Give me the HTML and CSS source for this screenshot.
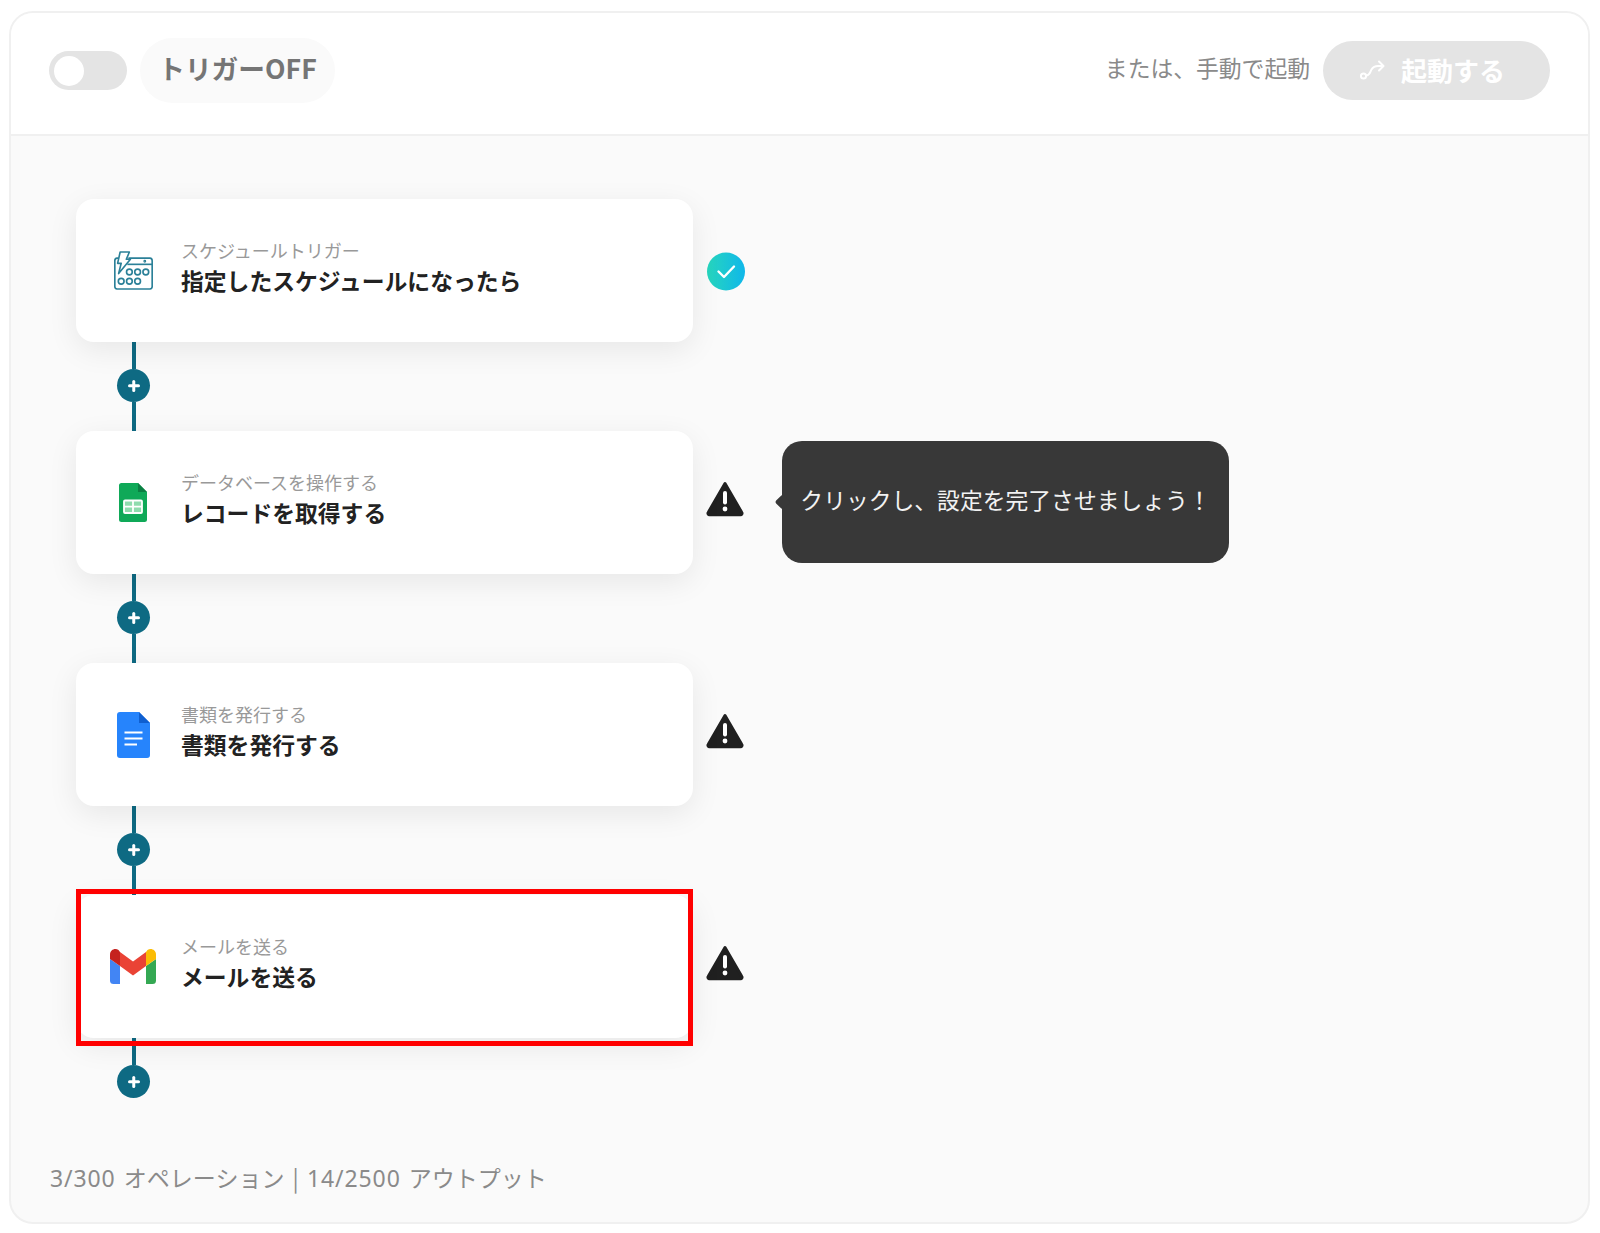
FILE: index.html
```html
<!DOCTYPE html>
<html lang="ja">
<head>
<meta charset="utf-8">
<title>フローボット</title>
<link rel="stylesheet" href="styles.css">
</head>
<body>
<main class="panel">
  <header class="topbar">
    <div class="trigger">
      <span class="toggle"><span class="knob"></span></span>
      <span class="trigger-label">トリガーOFF</span>
    </div>
    <div class="manual">
      <span class="manual-text">または、手動で起動</span>
      <button class="start" type="button">
        <svg class="start-icon" viewBox="0 0 26 22" fill="none" stroke="#fff" stroke-width="2" stroke-linecap="round" stroke-linejoin="round">
          <circle cx="3.500" cy="16" r="2.600"/>
          <path d="M6.200 15.500C10 15.500 10 12 11.500 9.500 13 7 15 6 18 6h5"/>
          <path d="M19 1.500L23.500 6 19 10.500"/>
        </svg>
        <span class="start-label">起動する</span>
      </button>
    </div>
  </header>

  <section class="flow">
    <div class="step">
      <div class="card">
        <div class="card-icon">
          <svg width="41" height="39" viewBox="0 0 38 38" fill="none" stroke="#2b8098" stroke-width="1.600" stroke-linejoin="round">
            <path d="M4 7H3a2.500 2.500 0 0 0-2.200 2.500v25A2.500 2.500 0 0 0 3 37h32a2.500 2.500 0 0 0 2.200-2.500v-25A2.500 2.500 0 0 0 35 7H14"/>
            <path d="M6 1h9l-3 7h4L4.500 22 7 12H3.500z"/>
            <path d="M13 13h24"/>
            <circle cx="30" cy="10" r=".6"/>
            <circle cx="15" cy="20.500" r="2.800"/><circle cx="23" cy="20.500" r="2.800"/><circle cx="31" cy="20.500" r="2.800"/>
            <circle cx="7" cy="29.500" r="2.800"/><circle cx="15" cy="29.500" r="2.800"/><circle cx="23" cy="29.500" r="2.800"/>
          </svg>
        </div>
        <div class="card-text">
          <span class="card-sub">スケジュールトリガー</span>
          <span class="card-title">指定したスケジュールになったら</span>
        </div>
      </div>
      <div class="status status-ok">
        <svg width="38" height="39" viewBox="0 0 38 39">
          <defs><linearGradient id="okg" x1="0" y1="0" x2="1" y2="0"><stop offset="0" stop-color="#27d6bd"/><stop offset="1" stop-color="#0fb7ea"/></linearGradient></defs>
          <circle cx="19" cy="19.500" r="19" fill="url(#okg)"/>
          <path d="M11.500 19.500l5.500 5.500 10-10.500" fill="none" stroke="#fff" stroke-width="2.400" stroke-linecap="round" stroke-linejoin="round"/>
        </svg>
      </div>
    </div>
    <div class="link"><span class="seg"></span><span class="plus"></span><span class="seg"></span></div>

    <div class="step">
      <div class="card">
        <div class="card-icon">
          <svg width="28" height="39" viewBox="0 0 28 39">
            <path d="M2.500 0H19l9 9v27.500a2.500 2.500 0 0 1-2.500 2.500h-23A2.500 2.500 0 0 1 0 36.500v-34A2.500 2.500 0 0 1 2.500 0z" fill="#0fa958"/>
            <path d="M19 0l9 9h-9z" fill="#0b7f43"/>
            <rect x="5" y="17.500" width="18" height="12.500" rx="1" fill="#8fdcae" stroke="#fff" stroke-width="1.800"/>
            <path d="M14 17.500v12.500M5 23.700h18" stroke="#fff" stroke-width="1.800"/>
          </svg>
        </div>
        <div class="card-text">
          <span class="card-sub">データベースを操作する</span>
          <span class="card-title">レコードを取得する</span>
        </div>
      </div>
      <div class="status">
        <svg class="warn" width="38" height="36" viewBox="0 0 38 36"><path d="M19 2.500L35.800 31.500a1.500 1.500 0 0 1-1.300 2.300h-31a1.500 1.500 0 0 1-1.300-2.300z" fill="#202020" stroke="#202020" stroke-width="3" stroke-linejoin="round"/><rect x="17" y="10" width="4" height="13.500" rx="2" fill="#fff"/><circle cx="19" cy="28" r="2.400" fill="#fff"/></svg>
      </div>
      <div class="tip"><span class="tip-text">クリックし、設定を完了させましょう！</span></div>
    </div>
    <div class="link"><span class="seg"></span><span class="plus"></span><span class="seg"></span></div>

    <div class="step">
      <div class="card">
        <div class="card-icon">
          <svg width="33" height="46" viewBox="0 0 33 46">
            <path d="M3 0H22l11 11v32a3 3 0 0 1-3 3H3a3 3 0 0 1-3-3V3a3 3 0 0 1 3-3z" fill="#2684fc"/>
            <path d="M22 0l11 11H22z" fill="#0f5fd0"/>
            <path d="M7.500 20.500h18M7.500 26.500h18M7.500 32.500h12.500" stroke="#fff" stroke-width="2.200"/>
          </svg>
        </div>
        <div class="card-text">
          <span class="card-sub">書類を発行する</span>
          <span class="card-title">書類を発行する</span>
        </div>
      </div>
      <div class="status">
        <svg class="warn" width="38" height="36" viewBox="0 0 38 36"><path d="M19 2.500L35.800 31.500a1.500 1.500 0 0 1-1.300 2.300h-31a1.500 1.500 0 0 1-1.300-2.300z" fill="#202020" stroke="#202020" stroke-width="3" stroke-linejoin="round"/><rect x="17" y="10" width="4" height="13.500" rx="2" fill="#fff"/><circle cx="19" cy="28" r="2.400" fill="#fff"/></svg>
      </div>
    </div>
    <div class="link"><span class="seg"></span><span class="plus"></span><span class="seg"></span></div>

    <div class="step">
      <div class="card">
        <span class="highlight"></span>
        <div class="card-icon">
          <svg width="46" height="35" viewBox="0 0 46 35">
            <path d="M0 10v21.500A3.500 3.500 0 0 0 3.500 35H10V17z" fill="#4285f4"/>
            <path d="M36 17v18h6.500a3.500 3.500 0 0 0 3.500-3.500V10z" fill="#34a853"/>
            <path d="M36 3v14l10-7V5.500C46 1 41 -1.500 37.500 1z" fill="#fbbc04"/>
            <path d="M10 17V3l13 9.500L36 3v14L23 26.500z" fill="#ea4335"/>
            <path d="M0 5.500V10l10 7V3L8.500 1C5-1.500 0 1 0 5.500z" fill="#c5221f"/>
          </svg>
        </div>
        <div class="card-text">
          <span class="card-sub">メールを送る</span>
          <span class="card-title">メールを送る</span>
        </div>
      </div>
      <div class="status">
        <svg class="warn" width="38" height="36" viewBox="0 0 38 36"><path d="M19 2.500L35.800 31.500a1.500 1.500 0 0 1-1.300 2.300h-31a1.500 1.500 0 0 1-1.300-2.300z" fill="#202020" stroke="#202020" stroke-width="3" stroke-linejoin="round"/><rect x="17" y="10" width="4" height="13.500" rx="2" fill="#fff"/><circle cx="19" cy="28" r="2.400" fill="#fff"/></svg>
      </div>
    </div>
    <div class="link"><span class="seg"></span><span class="plus"></span></div>
  </section>

  <footer class="usage"><span class="num">3/300</span> オペレーション | <span class="num">14/2500</span> アウトプット</footer>
</main>
</body>
</html>
```
FILE: styles.css
```css
* { box-sizing: border-box; }
html, body { margin: 0; height: 100%; background: #fff; }
body {
  padding: 11px 10px 0 9px;
  font-family: "Noto Sans CJK JP", "Noto Sans", sans-serif;
}
.panel {
  height: 1213px;
  display: flex;
  flex-direction: column;
  background: #fafafa;
  border: 2px solid #f0f0f0;
  border-radius: 24px;
  overflow: hidden;
}
.topbar {
  height: 123px;
  flex: none;
  display: flex;
  align-items: center;
  justify-content: space-between;
  padding: 0 38px 6px 38px;
  background: #fff;
  border-bottom: 2px solid #f0f0f0;
}
.trigger, .manual { display: flex; align-items: center; }
.trigger { gap: 13px; }
.toggle {
  width: 78px;
  height: 39px;
  display: flex;
  align-items: center;
  padding-left: 5px;
  background: #e4e4e4;
  border-radius: 20px;
}
.knob { width: 30px; height: 30px; background: #fff; border-radius: 50%; }
.trigger-label {
  width: 195px;
  height: 65px;
  display: flex;
  align-items: center;
  justify-content: center;
  padding-bottom: 6px;
  background: #fafafa;
  border-radius: 33px;
  color: #757575;
  font-size: 26.700px;
  font-weight: 700;
}
.manual { gap: 13px; }
.manual-text { padding-bottom: 6px; color: #8a8a8a; font-size: 22.800px; }
.start {
  width: 227px;
  height: 59px;
  display: flex;
  align-items: center;
  justify-content: center;
  gap: 15px;
  padding: 0 8px 0 0;
  border: 0;
  border-radius: 30px;
  background: #e4e4e4;
  color: #fff;
  font: 700 26px "Noto Sans CJK JP", sans-serif;
}
.start-icon { width: 26px; height: 22px; }
.start-label { padding-bottom: 3px; }

.flow { padding: 63px 0 0 65px; flex: none; }
.step { display: flex; align-items: center; }
.card {
  position: relative;
  width: 617px;
  height: 143px;
  flex: none;
  display: flex;
  align-items: center;
  gap: 22px;
  padding-left: 31px;
  background: #fff;
  border-radius: 18px;
  box-shadow: 0 8px 30px rgba(0, 0, 0, 0.08);
}
.card-icon {
  width: 52px;
  flex: none;
  display: flex;
  justify-content: center;
}
.card-icon svg { display: block; }
.card-text { display: flex; flex-direction: column; padding-bottom: 6px; }
.card-sub { color: #999; font-size: 18px; line-height: 26px; }
.card-title { color: #222; font-size: 22.800px; font-weight: 700; line-height: 35px; }
.highlight {
  position: absolute;
  inset: -6px 0 -8px 0;
  border: 5px solid #f00;
  pointer-events: none;
}
.status {
  width: 38px;
  margin-left: 13px;
  flex: none;
  display: flex;
  justify-content: center;
}
.status svg { display: block; }
.status-ok { margin-left: 14px; margin-top: 1px; }
.warn { margin-top: -8px; }
.tip {
  position: relative;
  width: 447px;
  height: 122px;
  margin: 0 0 1px 38px;
  display: flex;
  align-items: center;
  justify-content: center;
  color: #f2f2f2;
  font-size: 22.800px;
  background: #383838;
  border-radius: 20px;
}
.tip-text { padding-bottom: 5px; }
.tip::before {
  content: "";
  position: absolute;
  left: -5px;
  top: 50%;
  width: 11px;
  height: 11px;
  background: #383838;
  transform: translateY(-50%) rotate(45deg);
  border-radius: 2px;
}
.link {
  width: 33px;
  margin-left: 41px;
  display: flex;
  flex-direction: column;
  align-items: center;
}
.seg { width: 4px; height: 27px; background: #0e6a83; }
.seg:last-child { height: 29px; }
.plus {
  position: relative;
  width: 33px;
  height: 33px;
  flex: none;
  background: #0e6a83;
  border-radius: 50%;
}
.plus::before, .plus::after {
  content: "";
  position: absolute;
  left: 50%;
  top: 50%;
  background: #fff;
  border-radius: 2px;
  transform: translate(-50%, -50%);
}
.plus::before { width: 12px; height: 3.500px; }
.plus::after { width: 3.500px; height: 12px; }
.usage {
  margin-top: auto;
  padding: 0 0 27px 39px;
  color: #8a8a8a;
  font-size: 23px;
  line-height: 34px;
  word-spacing: 3px;
}
.num { font-family: "Noto Sans", sans-serif; letter-spacing: 0.9px; }
```
